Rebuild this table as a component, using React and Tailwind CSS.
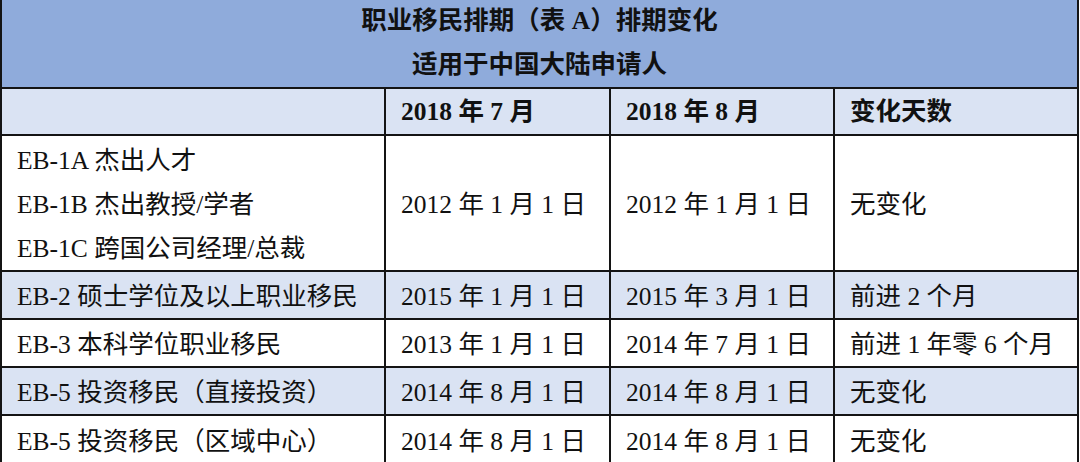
import React from 'react';

const rows = [
  {
    name: ['EB-1A 杰出人才', 'EB-1B 杰出教授/学者', 'EB-1C 跨国公司经理/总裁'],
    jul: '2012 年 1 月 1 日',
    aug: '2012 年 1 月 1 日',
    change: '无变化',
    shaded: false,
    h: 'h-[136px]',
  },
  { name: ['EB-2 硕士学位及以上职业移民'], jul: '2015 年 1 月 1 日', aug: '2015 年 3 月 1 日', change: '前进 2 个月', shaded: true, h: 'h-[48px]' },
  { name: ['EB-3 本科学位职业移民'], jul: '2013 年 1 月 1 日', aug: '2014 年 7 月 1 日', change: '前进 1 年零 6 个月', shaded: false, h: 'h-[48px]' },
  { name: ['EB-5 投资移民（直接投资）'], jul: '2014 年 8 月 1 日', aug: '2014 年 8 月 1 日', change: '无变化', shaded: true, h: 'h-[48px]' },
  { name: ['EB-5 投资移民（区域中心）'], jul: '2014 年 8 月 1 日', aug: '2014 年 8 月 1 日', change: '无变化', shaded: false, h: 'h-[48px]' },
];

function Cell({ className = '', last = false, children }) {
  return (
    <div
      className={`flex flex-col justify-center pl-[15px] ${last ? 'flex-1' : 'border-r-2 border-[#141414]'} ${className}`}
    >
      {children}
    </div>
  );
}

export default function App() {
  return (
    <div
      className="w-[1079px] bg-white text-[#111] text-[25.5px] leading-[44px]"
      style={{ fontFamily: '"Liberation Serif", "Noto Sans CJK SC", serif' }}
    >
      <div className="border-x-2 border-b-2 border-[#141414]">
        {/* Title */}
        <div className="h-[89px] bg-[#8fabdb] border-b-2 border-[#141414] flex flex-col items-center justify-center font-bold">
          <div className="-mt-[2px]">职业移民排期（表 A）排期变化</div>
          <div>适用于中国大陆申请人</div>
        </div>

        {/* Header */}
        <div className="h-[47px] flex bg-[#dae3f3] border-b-2 border-[#141414] font-bold">
          <Cell className="w-[384px]" />
          <Cell className="w-[225px]">2018 年 7 月</Cell>
          <Cell className="w-[224px]">2018 年 8 月</Cell>
          <Cell last>变化天数</Cell>
        </div>

        {rows.map((row, i) => (
          <div
            key={i}
            className={`${row.h} flex ${row.shaded ? 'bg-[#dae3f3]' : 'bg-white'} ${i < rows.length - 1 ? 'border-b-2 border-[#141414]' : ''}`}
          >
            <Cell className="w-[384px] pt-[3px]">
              {row.name.map((n) => (
                <div key={n}>{n}</div>
              ))}
            </Cell>
            <Cell className="w-[225px] pt-[3px]">{row.jul}</Cell>
            <Cell className="w-[224px] pt-[3px]">{row.aug}</Cell>
            <Cell last className="pt-[3px]">{row.change}</Cell>
          </div>
        ))}
      </div>
    </div>
  );
}
